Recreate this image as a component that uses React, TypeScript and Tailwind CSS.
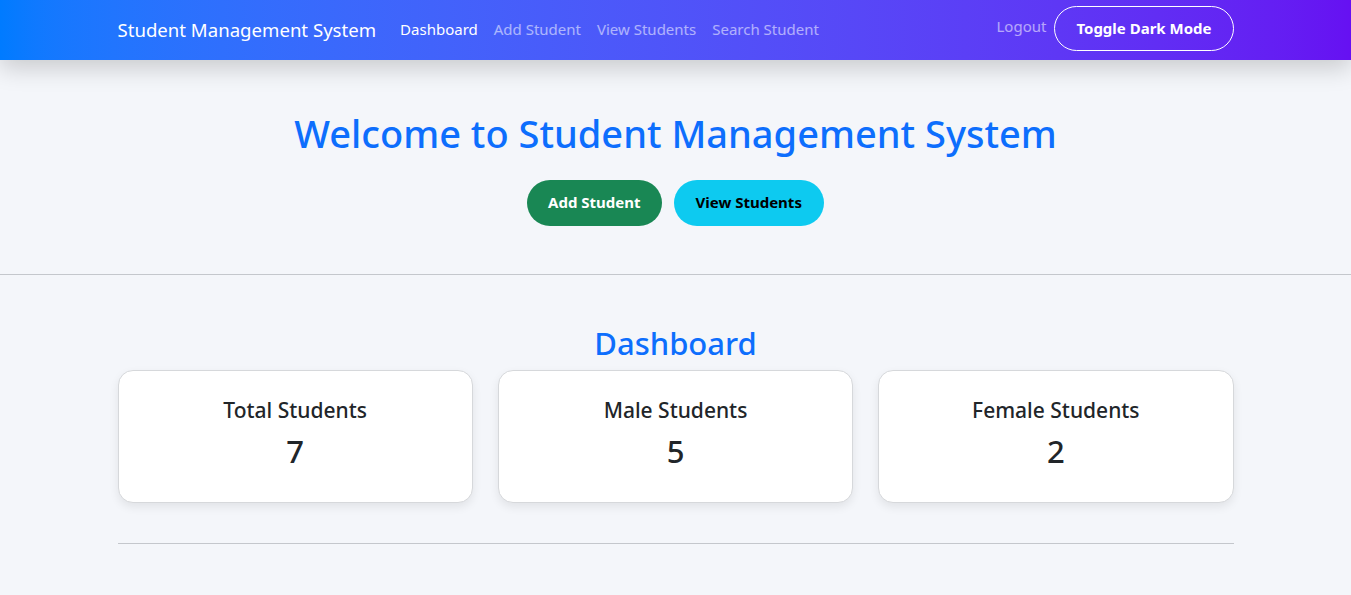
export default function App() {
  const stats = [
    { label: "Total Students", value: 7 },
    { label: "Male Students", value: 5 },
    { label: "Female Students", value: 2 },
  ];

  return (
    <div
      className="min-h-[595px] bg-[#f4f6fa] text-[#212529]"
      style={{ fontFamily: '"Noto Sans", "Open Sans", sans-serif' }}
    >
      <nav className="relative z-10 h-[60px] bg-gradient-to-r from-[#007bff] to-[#6610f2] shadow-[0_8px_24px_rgba(0,0,0,0.18)]">
        <div className="mx-auto flex h-full w-[1140px] items-center px-3">
          <a className="mr-4 -mt-[1px] text-[18.6px] text-white">Student Management System</a>
          <div className="-mt-[1px] flex items-center text-[15px]">
            <a className="px-2 text-white">Dashboard</a>
            <a className="px-2 text-white/55">Add Student</a>
            <a className="px-2 text-white/55">View Students</a>
            <a className="px-2 text-white/55">Search Student</a>
          </div>
          <div className="ml-auto -mt-[4px] flex items-center">
            <a className="-mt-1 px-2 text-[15px] text-white/55">Logout</a>
            <button className="h-[45px] rounded-full border border-white px-[21px] text-[15px] font-bold text-white">
              Toggle Dark Mode
            </button>
          </div>
        </div>
      </nav>

      <section className="flex flex-col items-center pt-[51px] pb-[48px]">
        <h1 className="text-[38px] font-medium leading-[1.2] text-[#0d6efd]">
          Welcome to Student Management System
        </h1>
        <div className="mt-[23px] flex gap-3">
          <button className="h-[46px] rounded-full bg-[#198754] px-[21px] text-[15px] font-bold text-white">
            Add Student
          </button>
          <button className="h-[46px] rounded-full bg-[#0dcaf0] px-[22px] text-[15px] font-bold text-black">
            View Students
          </button>
        </div>
      </section>

      <hr className="border-t border-[#c4c7cc]" />

      <section className="mx-auto w-[1140px] px-3 pt-[50px]">
        <h2 className="text-center text-[31px] font-medium leading-[1.2] text-[#0d6efd]">Dashboard</h2>
        <div className="mt-[8px] grid grid-cols-3 gap-[25px]">
          {stats.map((s) => (
            <div
              key={s.label}
              className="flex h-[133px] flex-col items-center rounded-[15px] border border-[#d6d8db] bg-white pt-[26px] shadow-[0_4px_10px_rgba(0,0,0,0.08)]"
            >
              <h5 className="text-[21px] font-medium leading-[1.3]">{s.label}</h5>
              <p className="mt-[9px] text-[31px] font-medium leading-[1.2]">{s.value}</p>
            </div>
          ))}
        </div>
        <hr className="mt-[40px] border-t border-[#c4c7cc]" />
      </section>
    </div>
  );
}
